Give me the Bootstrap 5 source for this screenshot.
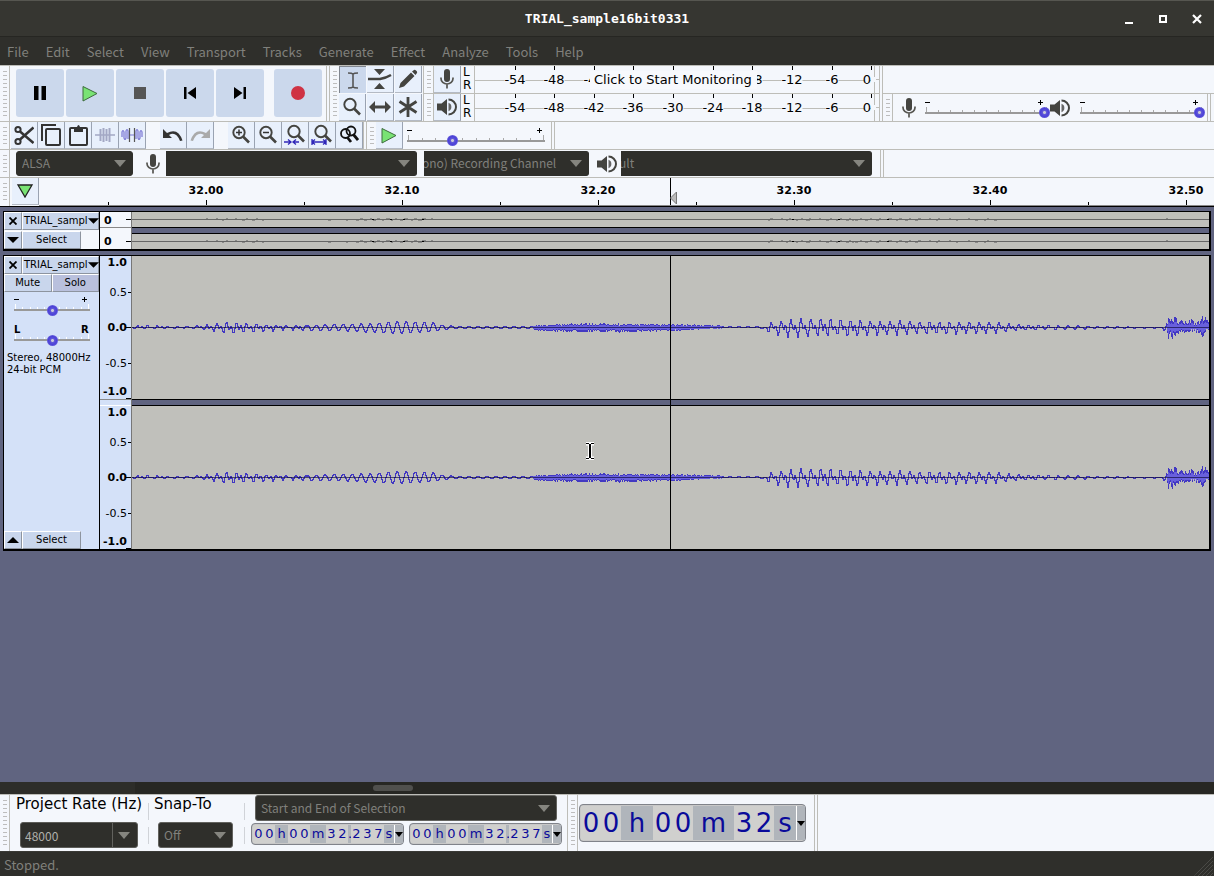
<!DOCTYPE html>
<html lang="en">
<head>
<meta charset="utf-8">
<meta name="viewport" content="width=device-width, initial-scale=1">
<title>TRIAL_sample16bit0331</title>
<link href="https://cdn.jsdelivr.net/npm/bootstrap@5.3.0/dist/css/bootstrap.min.css" rel="stylesheet">
<style>
:root{--dark:#2f2f2b;--panel:#f4f7fc;--line:#bdbdb8;--btn:#e8f0fc;--blue:#cbd8ec;--face:#c9d6ec;--desk:#606480;--dim:#80807c}
body{font:13px/16px "DejaVu Sans",sans-serif;color:#000;background:var(--dark)}
button{border:0;padding:0;color:inherit;display:flex;align-items:center;justify-content:center}
.ui{font-family:"Noto Sans CJK SC","Noto Sans",sans-serif}
.titlebar{height:36px;background:#363631;border-top:1px solid #565650;color:#fff;display:grid;grid-template-columns:1fr auto 1fr}
.titlebar h1{font:bold 13px/34px "DejaVu Sans Mono",monospace;margin:0}
.winbtns{gap:18px;padding-right:9px}
.winbtns button{width:16px;height:16px;background:none}
.menubar{height:29px;border-top:1px solid #262622;padding:0 7px;gap:17px;font-size:13px}
.menubar a{color:var(--dim);text-decoration:none;line-height:29px}
.dock{background:var(--panel);border-top:1px solid var(--line)}
.dockrow{border-bottom:1px solid var(--line)}
.tall{height:56px}.low{height:28px}
.tb{border-right:1px solid var(--line);margin-right:2px}
.grip{width:10px;flex:none;border-right:1px solid var(--line);padding:5px 2px 4px 3px}
.grip::before{content:"";display:block;height:100%;background:repeating-linear-gradient(#bdbdbd 0 1px,transparent 1px 4px)}
.lead-line{border-left:1px solid var(--line)}
.lead-line>.grip{width:9px}
.transport{padding:3px 4px 0 6px;gap:2px}
.transport button{width:48px;height:48px;background:var(--blue);border-radius:3px}
.tool{width:27px;height:27px;flex:none;background:var(--btn);border-right:1px solid #9aa3b2;border-bottom:1px solid #b4bac4;color:#444440}
.tool.on{background:var(--blue);border:0;border-left:1px solid #80868f;border-top:1px solid #80868f}
.toolgrid{display:grid;grid-template-columns:27px 27px 27px;gap:1px;padding-right:1px}
.editbar{padding-left:1px}
.editbar .brk{margin-left:14px}
.ch{width:13px;line-height:13px;padding-left:2px;font-size:12px}
.meterrow{height:28px}
.meterrow+.meterrow{height:27px}
.meterrow:first-child{border-bottom:1px solid var(--line)}
svg text{font-family:"DejaVu Sans",sans-serif}
.slide{display:grid;flex:none}
.slide>*{grid-area:1/1}
.slide input{appearance:none;background:none;width:100%;height:12px;margin:0;align-self:end}
.slide input::-webkit-slider-thumb{appearance:none;width:11px;height:11px;border:0;border-radius:50%;background:radial-gradient(circle,#c9c8d8 0 1px,#6058d8 2px,#4a40d8 4px,#7069da 6px)}
.mixer{padding:0 2px 0 0}
.mixer .mic{margin:0 6px 0 8px}
.mixer .spk{margin-right:8px}
.speed{margin:0 4px 0 2px}
.combo.form-select,.combo.form-control{font:12px/18px "Noto Sans CJK SC","Noto Sans",sans-serif;height:26px;padding:3px 28px 3px 5px;color:var(--dim);border:1px solid var(--dark);border-radius:3px;flex:none;
background:var(--dark) url("data:image/svg+xml,%3Csvg xmlns='http://www.w3.org/2000/svg' width='12' height='7'%3E%3Cpath fill='%2385857f' d='M0 0h12L6 7z'/%3E%3C/svg%3E") no-repeat right 6px center;background-size:12px 7px}
.devices{padding-left:0}
.devices .combo.form-select{height:25px;padding-top:2px}
.devices .mic{margin:0 5px 0 12px}
.devices .spk{margin:0 4px 0 8px}
.devices .host{width:117px;margin-left:6px}
.devices .rec,.devices .play{width:251px}
.devices .chan{width:165px;margin-left:7px}
.combo.cut.form-select{border-radius:0 3px 3px 0;padding-left:0;border-left:0;text-indent:-2px}
.combo.sel.form-select{border-color:#62625e}
.combo.rate.form-control{width:118px;padding-left:4px;color:#b0b0ac;border-color:#5c5c58;
background-image:url("data:image/svg+xml,%3Csvg xmlns='http://www.w3.org/2000/svg' width='25' height='26'%3E%3Cpath fill='%2385857f' d='M6 10h12L12 17z'/%3E%3Cpath d='M.5 0v26' stroke='%2362625e'/%3E%3C/svg%3E");background-position:right 0 center;background-size:25px 26px}
.desk{background:var(--desk);border-top:1px solid #000;padding:4px 3px 0 3px}
.track{border:1px solid #000;border-right-width:2px;border-bottom-width:2px;margin-bottom:4px;position:relative}
.head{width:96px;flex:none;border-right:1px solid #000;font-size:10px;line-height:12px}
.head button{background:var(--face);border:1px solid #fff;border-right-color:#8d949f;border-bottom-color:#8d949f;height:18px;font-size:10px}
.head .sq{width:18px;flex:none}
.head .pick{width:59px}
.head .solo{background:#b9c0dd}
.head .slide{margin:2px 0 0 8px}
.head .slide+.slide{margin-top:8px}
.head .info{padding:6px 0 0 3px;white-space:nowrap}
.head .tname{flex:1 1 0;min-width:0;justify-content:space-between;padding:0 0 0 1px}
.vr{width:32px;flex:none;border-right:1px solid #777}
.vr-gap{height:7px;border-top:1px solid #888;border-bottom:1px solid #fff}
.gap-line{height:7px;border-top:1px solid #000;border-bottom:1px solid #000;background:var(--desk)}
.wave{background:#c0c0bb;display:block;width:100%}
.bluebg{background:#d4e1f8}.palebg{background:var(--panel)}
.cursorline{position:absolute;top:0;bottom:0;left:666px;width:1px;background:#000}
.ibeam{position:absolute;left:580px;top:186px}
.scroll{height:12px;background:#272723}
.scroll .lft{width:135px;background:#2d2d29}
.scroll .thumb{width:40px;height:6px;border-radius:3px;background:#50504d;margin:3px 0 0 238px}
.selbar{height:57px}
.fieldcol{font-size:15px;line-height:18px;white-space:nowrap}
.fieldcol .combo{margin:9px 0 0 4px}
.col-rate{width:138px;padding-left:6px}
.col-snap{width:95px;padding-left:5px}
.col-snap .combo{width:75px}
.selmode.form-select{width:302px;margin-left:4px}
.vsep{width:1px;border-left:1px solid #d0d3d8;height:17px}
.tc{border:1px solid #80838a;border-radius:4px;background:#b0b5bb;color:#0a0a9a;height:22px;padding:1px 0 1px 1px;font-size:13px;line-height:18px;box-shadow:inset 0 0 0 1px #c8c8c8}
.tc span{text-align:center;flex:none}
.tc .d{background:#d0d0ce;width:11px}
.tc .u{width:13px}.tc .um{width:16px}.tc .p{width:3px}.tc .us{width:10px}
.tc button{width:9px;background:#b0b5bb;border-left:1px solid #fff;color:#000}
.tc.xl{height:38px;font-size:26px;line-height:34px}
.tc.xl .d{width:20px}.tc.xl .u{width:32px}.tc.xl .um{width:41px}.tc.xl .us{width:22px}
.status{height:25px;color:var(--dim);font-size:13px;line-height:26px;padding-left:4px;border-top:1px solid #3a3a36}
</style>
</head>
<body class="d-flex flex-column min-vh-100">
<svg width="0" height="0" class="position-absolute" aria-hidden="true">
<defs>
<symbol id="mic" viewBox="0 0 16 20"><rect x="5" y="0" width="6" height="13" rx="3" fill="#444440"/><path d="M2 8.500v1a6 5.500 0 0 0 12 0v-1M8 15.500V19.500" stroke="#555550" stroke-width="1.700" fill="none"/></symbol>
<symbol id="spk" viewBox="0 0 20 18"><path d="M0 5.500h4.500L10 1v16l-5.500-4.500H0z" fill="#444440"/><path d="M11.500 1.500a7.500 7.500 0 0 1 0 15" fill="none" stroke="#444440" stroke-width="2"/><path d="M11.500 4.800a4.500 4.500 0 0 1 0 8.400" fill="#666"/></symbol>
<symbol id="mag" viewBox="0 0 20 20"><circle cx="8" cy="7.500" r="5.700" fill="none" stroke="currentColor" stroke-width="1.900"/><path d="M12 11.500l6 6" stroke="currentColor" stroke-width="2.600"/></symbol>
<symbol id="tri" viewBox="0 0 16 16"><path d="M1 1l14 7-14 7.500z" fill="#79e374" stroke="#3d6b3d" stroke-width="1"/></symbol>
<symbol id="ex" viewBox="0 0 8 8"><path d="M.5.5l7 7M7.500.5l-7 7" stroke="currentColor" stroke-width="1.800"/></symbol>
<symbol id="down" viewBox="0 0 12 6"><path d="M0 0h12L6 6z"/></symbol>
<pattern id="hatch" width="4" height="4" patternUnits="userSpaceOnUse"><path d="M0 4L4 0" stroke="#4a4a46"/></pattern>
</defs></svg>

<header class="titlebar align-items-center">
  <span></span><h1>TRIAL_sample16bit0331</h1>
  <div class="winbtns d-flex justify-content-end">
    <button aria-label="Minimize"><svg width="16" height="16"><path d="M4 11h8v2H4z" fill="#fff"/></svg></button>
    <button aria-label="Maximize"><svg width="16" height="16"><rect x="5" y="5" width="6" height="6" fill="none" stroke="#fff" stroke-width="2"/></svg></button>
    <button aria-label="Close"><svg width="16" height="16"><path d="M4 4l8 8M12 4l-8 8" stroke="#fff" stroke-width="2.200"/></svg></button>
  </div>
</header>
<nav class="menubar ui d-flex" aria-label="Menu">
<a href="#">File</a><a href="#">Edit</a><a href="#">Select</a><a href="#">View</a><a href="#">Transport</a><a href="#">Tracks</a><a href="#">Generate</a><a href="#">Effect</a><a href="#">Analyze</a><a href="#">Tools</a><a href="#">Help</a>
</nav>

<section class="dock">
 <div class="dockrow tall d-flex">
  <div class="tb d-flex">
   <div class="grip"></div>
   <div class="transport d-flex align-items-start">
    <button aria-label="Pause"><svg width="14" height="16"><path d="M1 1h4.500v14H1zM8.500 1H13v14H8.500z"/></svg></button>
    <button aria-label="Play"><svg width="16" height="17"><use href="#tri"/></svg></button>
    <button aria-label="Stop"><svg width="12" height="12"><rect width="12" height="12" fill="#555"/></svg></button>
    <button aria-label="Skip to start"><svg width="14" height="14"><path d="M1 1h2.500v12H1zM13 1v12L4.500 7z"/></svg></button>
    <button aria-label="Skip to end"><svg width="14" height="14"><path d="M10.500 1H13v12h-2.500zM1 1v12l8.500-6z"/></svg></button>
    <button aria-label="Record" class="ms-2"><svg width="14" height="14"><circle cx="7" cy="7" r="7" fill="#cf3344"/></svg></button>
   </div>
  </div>
  <div class="tb d-flex lead-line me-0">
   <div class="grip border-end-0"></div>
   <div class="toolgrid">
    <button class="tool on" aria-label="Selection tool"><svg width="20" height="20"><path d="M5 3q4 0 5 1 1-1 5-1M5 18q4 0 5-1 1 1 5 1M10 4v13" fill="none" stroke="#555" stroke-width="1.600"/></svg></button>
    <button class="tool" aria-label="Envelope tool"><svg width="26" height="22" fill="#444440"><path d="M7 1h11l-5.500 6zM7 21h11l-5.500-6z"/><path d="M1 11h12q6-1 11-4" stroke="#444440" stroke-width="2.500" fill="none"/></svg></button>
    <button class="tool" aria-label="Draw tool"><svg width="20" height="20"><path d="M1 19l1.500-5L13 3.500 16.500 7 6 17.500z M14 2.500l2-1.500q1-.5 2 .5l.8.8q.8 1 0 2L17.500 6z" fill="#444440"/></svg></button>
    <button class="tool" aria-label="Zoom tool"><svg width="20" height="20"><use href="#mag"/></svg></button>
    <button class="tool" aria-label="Time shift tool"><svg width="22" height="14" fill="#444440"><path d="M0 7l6-6v4.500h10V1l6 6-6 6V8.500H6V13z"/></svg></button>
    <button class="tool" aria-label="Multi-tool"><svg width="22" height="22"><path d="M11 1v20M2.500 5.500l17 11M19.500 5.500l-17 11" stroke="#444440" stroke-width="2.800"/></svg></button>
   </div>
  </div>
  <div class="tb">
   <div class="meterrow d-flex"><div class="grip"></div>
    <button class="tool" aria-label="Record meter"><svg width="16" height="20"><use href="#mic"/></svg></button>
    <div class="ch"><div>L</div><div>R</div></div>
    <svg width="405" height="27" class="meter" data-note="Click to Start Monitoring"></svg>
   </div>
   <div class="meterrow d-flex"><div class="grip"></div>
    <button class="tool" aria-label="Playback meter"><svg width="20" height="18"><use href="#spk"/></svg></button>
    <div class="ch"><div>L</div><div>R</div></div>
    <svg width="405" height="27" class="meter"></svg>
   </div>
  </div>
  <div class="flex-grow-1 lead-line">
   <div class="meterrow"></div>
   <div class="meterrow d-flex">
    <div class="tb mixer d-flex align-items-center">
     <div class="grip align-self-stretch"></div>
     <svg width="16" height="20" class="mic"><use href="#mic"/></svg>
     <div class="slide" data-w="127" data-plus="115"><input type="range" aria-label="Recording volume" value="100"></div>
     <svg width="20" height="18" class="spk"><use href="#spk"/></svg>
     <div class="slide" data-w="127" data-plus="115"><input type="range" aria-label="Playback volume" value="100"></div>
    </div><div class="lead-line"></div>
   </div>
  </div>
 </div>
 <div class="dockrow low d-flex">
  <div class="tb d-flex">
   <div class="grip"></div>
   <div class="editbar d-flex">
   <button class="tool" aria-label="Cut"><svg width="20" height="21" fill="none" stroke="#333" stroke-width="2"><circle cx="4" cy="4.500" r="2.600"/><circle cx="4" cy="16.500" r="2.600"/><path d="M6 6.500L19.500 18M6 14.500L19.500 2.500" stroke-width="2.500"/></svg></button>
   <button class="tool" aria-label="Copy"><svg width="20" height="22" fill="none" stroke="#333" stroke-width="2"><path d="M1 17V1h14"/><rect x="5" y="5" width="14" height="16" rx="1"/></svg></button>
   <button class="tool" aria-label="Paste"><svg width="19" height="22"><rect x="1" y="4" width="17" height="17" rx="1" fill="none" stroke="#333" stroke-width="2"/><path d="M5 3h3q1.500-4 3 0h3v5H5z" fill="#333"/></svg></button>
   <button class="tool" aria-label="Trim audio"><svg width="20" height="16" fill="none" stroke="#a3a8c4"><path d="M0 8h20" stroke-width="1.500"/><path d="M5.500 2v12M8.500 1v14M11.500 2v12M14.500 1v14" stroke-width="2"/></svg></button>
   <button class="tool" aria-label="Silence audio"><svg width="22" height="16" fill="none" stroke="#7a76d4" stroke-width="1.200"><path d="M1 10V5q1-3 2 0v6q1 3 2 0V4q1-3 2 0v8M8 8h6M15 12V4q1-3 2 0v7q1 3 2 0V5q1-3 2 0v5"/><path d="M8.500 1v14M13.500 1v14" stroke="#555"/></svg></button>
   <button class="tool brk" aria-label="Undo"><svg width="22" height="16"><path d="M1 2v9h9L7 8q7-4 11 6l2.500-.5Q16 0 5 6z" fill="#333"/></svg></button>
   <button class="tool" aria-label="Redo"><svg width="22" height="16"><path d="M21 2v9h-9l3-3Q8 4 4 14l-2.500-.5Q6 0 17 6z" fill="#aaa"/></svg></button>
   <button class="tool brk" aria-label="Zoom in"><svg width="20" height="20"><use href="#mag"/><path d="M5 7.500h6M8 4.500v6" stroke="#333" stroke-width="1.500"/></svg></button>
   <button class="tool" aria-label="Zoom out"><svg width="20" height="20"><use href="#mag"/><path d="M5 7.500h6" stroke="#333" stroke-width="1.500"/></svg></button>
   <button class="tool" aria-label="Fit selection"><svg width="22" height="22"><use href="#mag" x="2" width="20" height="20"/><path d="M0 18h7m2 0h6M4 15.500L7 18l-3 2.500M12 15.500L9 18l3 2.500" stroke="#3027b8" fill="none" stroke-width="1.300"/></svg></button>
   <button class="tool" aria-label="Fit project"><svg width="22" height="22"><use href="#mag" x="2" width="20" height="20"/><path d="M1 15v6M15 15v6M1 18h14M4 15.500L1 18l3 2.500M12 15.500L15 18l-3 2.500" stroke="#3027b8" fill="none" stroke-width="1.300"/></svg></button>
   <button class="tool" aria-label="Zoom toggle"><svg width="20" height="20" fill="none" stroke="#111" stroke-width="1.800"><circle cx="6.500" cy="8.500" r="4.500"/><circle cx="12" cy="6" r="4.500"/><path d="M8 12l4 5M14 9l5 6" stroke-width="2.800"/></svg></button>
   </div>
  </div>
  <div class="tb d-flex lead-line">
   <div class="grip border-end-0"></div>
   <button class="tool" aria-label="Play at speed"><svg width="16" height="17"><use href="#tri"/></svg></button>
   <div class="slide speed align-self-center" data-w="142" data-plus="132"><input type="range" aria-label="Playback speed" value="32"></div>
  </div><div class="lead-line"></div>
 </div>
 <div class="dockrow low devices d-flex align-items-center">
  <div class="grip align-self-stretch"></div>
  <select class="form-select combo host" aria-label="Audio host"><option>ALSA</option></select>
  <svg width="16" height="20" class="flex-shrink-0 mic"><use href="#mic"/></svg>
  <select class="form-select combo cut rec" aria-label="Recording device"><option></option></select>
  <select class="form-select combo cut chan" aria-label="Recording channels"><option>ono) Recording Channel</option></select>
  <svg width="20" height="18" class="flex-shrink-0 spk"><use href="#spk"/></svg>
  <select class="form-select combo cut play" aria-label="Playback device"><option>ult</option></select>
  <div class="tb ps-2 align-self-stretch"></div><div class="lead-line align-self-stretch"></div>
 </div>
 <div class="low d-flex">
  <div class="grip"></div>
  <div class="d-flex flex-grow-1" style="padding-left:2px">
  <button class="tool" aria-label="Pin play head"><svg width="18" height="14"><path d="M2 1h14L9 13z" fill="#79e374" stroke="#222" stroke-width="1.300"/></svg></button>
  <svg id="ruler" class="flex-grow-1" height="28"></svg>
  </div>
 </div>
</section>

<main class="desk flex-grow-1">
 <div class="track d-flex palebg">
  <div class="head d-flex flex-column justify-content-between">
   <div class="d-flex"><button class="sq" aria-label="Close track"><svg width="8" height="8"><use href="#ex"/></svg></button><button class="tname"><span>TRIAL_sampl</span><svg width="11" height="6" class="flex-shrink-0"><use href="#down"/></svg></button></div>
   <div class="d-flex"><button class="sq" aria-label="Expand track"><svg width="12" height="6"><use href="#down"/></svg></button><button class="pick">Select</button></div>
  </div>
  <div class="vr opacity-100 palebg"><svg width="31" height="37" font-size="11" font-weight="bold"><path d="M26 7.500h5M26 29.500h5" stroke="#000"/><path d="M0 15.500h31" stroke="#888"/><text x="4" y="12">0</text><text x="4" y="33">0</text></svg></div>
  <div class="flex-grow-1"><svg class="wave thin" height="15"></svg><div class="gap-line"></div><svg class="wave thin" height="15"></svg></div>
 </div>
 <div class="track d-flex bluebg">
  <div class="head d-flex flex-column">
   <div class="d-flex"><button class="sq" aria-label="Close track"><svg width="8" height="8"><use href="#ex"/></svg></button><button class="tname"><span>TRIAL_sampl</span><svg width="11" height="6" class="flex-shrink-0"><use href="#down"/></svg></button></div>
   <div class="d-flex"><button class="w-50">Mute</button><button class="w-50 solo">Solo</button></div>
   <div class="slide" data-w="80" data-plus="70"><input type="range" aria-label="Gain" value="50"></div>
   <div class="slide" data-w="80" data-pan="1"><input type="range" aria-label="Pan" value="50"></div>
   <div class="info">Stereo, 48000Hz<br>24-bit PCM</div>
   <div class="d-flex mt-auto"><button class="sq" aria-label="Collapse track"><svg width="12" height="6"><path d="M0 6h12L6 0z"/></svg></button><button class="pick">Select</button></div>
  </div>
  <div class="vr opacity-100 bluebg d-flex flex-column"><svg class="scale" width="31" height="143"></svg><div class="vr-gap"></div><svg class="scale" width="31" height="143"></svg></div>
  <div class="flex-grow-1"><svg class="wave full" height="143"></svg><div class="gap-line"></div><svg class="wave full" height="143"></svg></div>
  <div class="cursorline"></div>
  <svg class="ibeam" width="12" height="18"><path d="M2 1.500h8M2 16.500h8M6 2v14" stroke="#fff" stroke-width="4"/><path d="M2 1.500h3M7 1.500h3M2 16.500h3M7 16.500h3" stroke="#000"/><path d="M6 2v14" stroke="#000" stroke-width="2"/></svg>
 </div>
</main>
<div class="scroll d-flex"><div class="lft"></div><div class="thumb"></div></div>

<section class="dock selbar d-flex">
 <div class="tb d-flex me-0">
  <div class="grip"></div>
  <div class="fieldcol col-rate"><label for="rate">Project Rate (Hz)</label>
   <input id="rate" class="form-control combo rate" value="48000"></div>
  <div class="d-flex flex-column justify-content-around py-1"><div class="vsep"></div><div class="vsep"></div></div>
  <div class="fieldcol col-snap"><label for="snap">Snap-To</label>
   <select id="snap" class="form-select combo sel"><option>Off</option></select></div>
  <div class="d-flex flex-column justify-content-around py-1 me-1"><div class="vsep"></div><div class="vsep"></div></div>
  <div style="padding:0 5px 0 2px">
   <select class="form-select combo sel selmode" aria-label="Selection mode"><option>Start and End of Selection</option></select>
   <div class="d-flex" style="gap:5px;margin-top:2px">
    <div class="tc d-flex" role="group" aria-label="Selection start"><span class="d">0</span><span class="d">0</span><span class="u">h</span><span class="d">0</span><span class="d">0</span><span class="um">m</span><span class="d">3</span><span class="d">2</span><span class="p">.</span><span class="d">2</span><span class="d">3</span><span class="d">7</span><span class="us">s</span><button aria-label="Format"><svg width="8" height="5"><path d="M0 0h8L4 5z"/></svg></button></div>
    <div class="tc d-flex" role="group" aria-label="Selection end"><span class="d">0</span><span class="d">0</span><span class="u">h</span><span class="d">0</span><span class="d">0</span><span class="um">m</span><span class="d">3</span><span class="d">2</span><span class="p">.</span><span class="d">2</span><span class="d">3</span><span class="d">7</span><span class="us">s</span><button aria-label="Format"><svg width="8" height="5"><path d="M0 0h8L4 5z"/></svg></button></div>
   </div>
  </div>
 </div>
 <div class="tb d-flex align-items-center pe-2">
  <div class="grip align-self-stretch"></div>
  <div class="tc xl d-flex" role="group" aria-label="Audio position" style="margin-left:1px"><span class="d">0</span><span class="d">0</span><span class="u">h</span><span class="d">0</span><span class="d">0</span><span class="um">m</span><span class="d">3</span><span class="d">2</span><span class="us">s</span><button aria-label="Format"><svg width="8" height="5"><path d="M0 0h8L4 5z"/></svg></button></div>
 </div><div class="lead-line"></div>
</section>
<footer class="status ui d-flex justify-content-between"><span>Stopped.</span><svg width="20" height="24"><path d="M19 2L0 24h19z" fill="url(#hatch)"/></svg></footer>

<script src="https://cdn.jsdelivr.net/npm/bootstrap@5.3.0/dist/js/bootstrap.bundle.min.js"></script>
<script>
// Level meters: one label every 6 dB; labels that the note covers are left out
document.querySelectorAll('.meter').forEach(m => {
  const note = m.dataset.note;
  let s = '<path d="M.5 0v27M400.500 0v11M400.500 16v11M402 13.500h3" stroke="#bdbdb8" fill="none"/><path d="M0 14.500h397" stroke="#bdbdb8"/>';
  const xs = [41, 80, 120, 159, 199, 239, 278, 318, 358, 397];
  xs.forEach((x, i) => {
    s += `<path d="M${x}.5 0v4" stroke="#000"/>`;
    if (note && i > 2 && i < 6) return;
    const t = String(-54 + i * 6), w = t.length * 8 - 3, c = i == 9 ? 393 : x;
    s += `<rect x="${c - w / 2}" y="7" width="${w}" height="13" fill="#f4f7fc"/><text x="${c}" y="18" font-size="13" text-anchor="middle">${t}</text>`;
  });
  if (note) s += `<rect x="116" y="5" width="167" height="18" fill="#f7f9fd"/><text x="120" y="18" font-size="13">${note}</text>`;
  m.innerHTML = s;
});
// Slider scales
document.querySelectorAll('.slide').forEach(d => {
  const w = +d.dataset.w, plus = +d.dataset.plus, white = d.closest('.head');
  d.style.width = w + 'px';
  let s = `<svg width="${w}" height="22"><path d="M2 16h${w - 4}" stroke="#999" stroke-width="2"/>`;
  for (let i = 0; i <= 10; i++) s += `<path d="M${Math.round(3 + i * (w - 7) / 10)}.5 ${i % 10 ? 13 : 10}V15" stroke="${white ? '#fff' : '#aaa'}"/>`;
  s += d.dataset.pan ? `<text x="2" y="9" font-size="10" font-weight="bold">L</text><text x="69" y="9" font-size="10" font-weight="bold">R</text>`
           : `<path d="M2 5.500h5M${plus} 5.500h5M${plus + 2.5} 3v5" stroke="#000"/>`;
  d.insertAdjacentHTML('afterbegin', s + '</svg>');
});
// Timeline: a label every 196 px, a minor tick halfway
const ruler = document.getElementById('ruler');
function drawRuler() {
  const width = ruler.getBoundingClientRect().width;
  let r = '';
  for (let i = 0, x = 167; x - 98 < width; i++, x += 196) {
    r += `<path d="M${x}.5 22v5M${x - 98}.5 24v3" stroke="#000"/>`;
    if (x + 20 < width) r += `<text x="${x}" y="16" font-size="11" font-weight="bold" text-anchor="middle">${(32 + i / 10).toFixed(2)}</text>`;
  }
  ruler.innerHTML = r + '<path d="M631.500 0v28" stroke="#000"/><path d="M637.500 14v12l-6-6z" fill="#bbb" stroke="#777"/><path d="M0 27.500h4000" stroke="#888"/>';
}
drawRuler();
addEventListener('resize', drawRuler);
// Amplitude scales
document.querySelectorAll('.scale').forEach(e => {
  e.innerHTML = [['1.0', 10, 1], ['0.5', 40], ['0.0', 75, 1], ['-0.5', 111], ['-1.0', 139, 1]].map(([t, y, b]) =>
    `<text x="27" y="${y}" font-size="11" text-anchor="end"${b ? ' font-weight="bold"' : ''}>${t}</text>`).join('') +
    '<path d="M28 36.500h3M26 71.500h5M28 107.500h3M26 142.500h5" stroke="#000"/>';
});
// Waveform: [x, up, down] envelope, linearly interpolated
const env = [[0,1,1],[6,2,1],[60,1,1],[70,2,2],[90,5,6],[108,5,6],[125,3,5],[150,2,3],[175,2,3],[205,3,3],[240,4,5],[265,6,6],[300,5,4],[310,2,2],[330,1,1],[395,1,1],[410,2,3],[448,4,4],[500,3,4],[540,3,3],[575,2,1],[610,1,0],[632,1,1],[636,4,5],[650,7,10],[675,9,9],[730,7,8],[790,6,7],[860,5,6],[885,3,3],[905,2,2],[940,2,2],[970,1,1],[1028,0,1],[1034,4,6],[1036,15,11],[1041,11,10],[1047,7,6],[1054,5,5],[1058,10,4],[1064,5,5],[1070,16,10],[1074,8,4],[1077,4,3]];
let seed = 7; const rnd = () => (seed = (seed * 16807) % 2147483647) / 2147483647;
const pulse = (d, w) => Math.exp(-(d * d) / (w * w));
let line = '', rms = '', dots = '', prev = 0, k = 0;
for (let x = 0; x < 1078; x++) {
  while (k < env.length - 2 && env[k + 1][0] < x) k++;
  const a = env[k], b = env[k + 1], f = (x - a[0]) / (b[0] - a[0]);
  const up = a[1] + (b[1] - a[1]) * f, dn = a[2] + (b[2] - a[2]) * f;
  if ((x > 400 && x < 590) || x > 1034) {
    const lo = x > 1034 ? .25 : .45, span = x > 1034 ? .8 : .7;
    const u = Math.round(up * (lo + span * rnd())), d = Math.round(dn * (lo + span * rnd()));
    line += `M${x + .5} ${-u}V${d + 1}`;
    rms += `M${x + .5} ${-Math.round(u / 2)}V${Math.round(d / 2) + 1}`;
    prev = 0;
  } else {
    const voiced = x > 630 || x < 175, period = voiced ? 9.9 : 9, t = (x - 658) / period;
    const ph = t - Math.round(t);
    let v = voiced ? pulse(ph, .13) - pulse(ph + .3, .12) + .3 * pulse(ph - .42, .1) - .3 * pulse(ph - .25, .1) + .2 * (rnd() - .5) : Math.sin(t * 2 * Math.PI);
    v = Math.round(v > 0 ? v * up : v * dn);
    line += `M${x + .5} ${-Math.max(v, prev)}V${1 - Math.min(v, prev)}`;
    if (up > 2.5 && Math.abs(v) > 2 && rnd() < .5) dots += `M${x} ${v > 0 ? -.5 : 1.5}h2`;
    prev = v;
  }
}
document.querySelectorAll('.full').forEach(e => e.innerHTML =
  `<g transform="translate(0 71)" fill="none"><path d="${line}" stroke="#4238c2"/><path d="${rms}" stroke="#6860dc"/><path d="M0 .5h4000" stroke="#0c0838" stroke-opacity=".65"/></g>`);
document.querySelectorAll('.thin').forEach(e => e.innerHTML =
  `<path d="M0 7.500h4000" stroke="#666"/><path d="${dots}" transform="translate(0 7)" stroke="#8a8a88"/><path d="M240 7.500h2M258 7.500h2M271 7.500h2M290 7.500h2M660 7.500h2M706 7.500h2M755 7.500h2" stroke="#000"/>`);
</script>
</body>
</html>
